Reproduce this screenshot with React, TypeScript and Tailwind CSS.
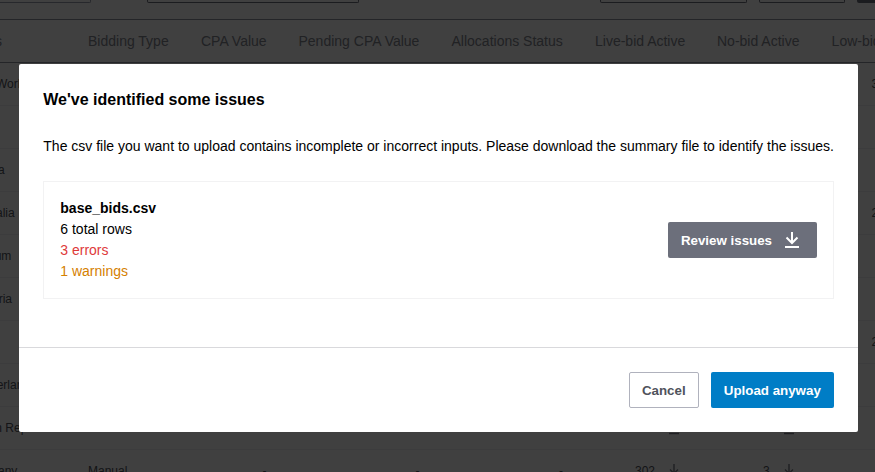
import type { ReactNode } from "react";

type Column = { label: string; width: string };

const columns: Column[] = [
  { label: "Bidding Type", width: "w-[81px]" },
  { label: "CPA Value", width: "w-[65.5px]" },
  { label: "Pending CPA Value", width: "w-[121px]" },
  { label: "Allocations Status", width: "w-[111.5px]" },
  { label: "Live-bid Active", width: "w-[90px]" },
  { label: "No-bid Active", width: "w-[82.6px]" },
  { label: "Low-bid Active", width: "w-[92px]" },
];

type Row = { name: string; type?: string; live?: string; no?: string; low?: string };

const rows: Row[] = [
  { name: "Rest World", low: "374" },
  { name: "" },
  { name: "Russia" },
  { name: "Australia", low: "238" },
  { name: "Belgium" },
  { name: "Bulgaria" },
  { name: "", low: "215" },
  { name: "Switzerland" },
  { name: "Czech Republic" },
  { name: "Germany", type: "Manual", live: "302", no: "3" },
];

function Arrow() {
  return (
    <svg className="h-3.5 w-2.5 shrink-0 text-[#7b7e88]" viewBox="0 0 10 14" fill="none" stroke="currentColor" strokeWidth="1.4">
      <path d="M5 0v9M1 5.5l4 4 4-4M0 12.5h10" />
    </svg>
  );
}

function Value({ width, children }: { width: string; children?: ReactNode }) {
  return <div className={`${width} shrink-0 text-right`}>{children}</div>;
}

function Metric({ width, children }: { width: string; children?: ReactNode }) {
  return (
    <div className={`${width} flex shrink-0 items-center justify-end gap-3.5 pr-1.5`}>
      <span>{children}</span>
      <Arrow />
    </div>
  );
}

function Page() {
  return (
    <div className="h-full w-full overflow-hidden bg-white">
      <div className="flex h-[3px]">
        <div className="w-[91px] shrink-0 rounded-br-xs border-r border-b border-[#9da1ae]" />
        <div className="ml-14 w-[212px] shrink-0 rounded-b-xs border border-t-0 border-[#6c6f7b]" />
        <div className="ml-[241px] w-[147px] shrink-0 rounded-b-xs border border-t-0 border-[#6c6f7b]" />
        <div className="ml-3 w-[86px] shrink-0 rounded-b-xs border border-t-0 border-[#6c6f7b]" />
        <div className="ml-3 w-10 shrink-0 rounded-bl-xs bg-[#6c6f7b]" />
      </div>
      <div className="mt-4 flex h-11 w-[950px] items-center gap-8 border-y border-[#8f929e] text-sm whitespace-nowrap text-[#83868f]">
        <div className="flex w-14 shrink-0 justify-start">
          <span className="-ml-[58px]">Countries</span>
        </div>
        {columns.map((column) => (
          <div key={column.label} className={`${column.width} shrink-0`}>
            {column.label}
          </div>
        ))}
      </div>
      {rows.map((row, index) => (
        <div key={index} className="flex h-[43px] w-[950px] items-center gap-8 border-b border-[#f0f0f2] text-xs whitespace-nowrap text-[#50535c]">
          <div className="w-14 shrink-0">
            <span className="-ml-8">{row.name}</span>
          </div>
          <div className="w-[81px] shrink-0">{row.type}</div>
          <Value width="w-[65.5px]">-</Value>
          <Value width="w-[121px]">-</Value>
          <Value width="w-[111.5px]">-</Value>
          <Metric width="w-[90px]">{row.live}</Metric>
          <Metric width="w-[82.6px]">{row.no}</Metric>
          <div className="w-[92px] shrink-0 pl-10">{row.low}</div>
        </div>
      ))}
    </div>
  );
}

export default function App() {
  return (
    <div className="relative h-[472px] w-[875px] overflow-hidden font-['Liberation_Sans',Arial,sans-serif]">
      <Page />
      <div className="absolute inset-0 flex items-start bg-black/75 pt-16 pl-[19.3px]">
        <div role="dialog" className="flex h-[368px] w-[839px] shrink-0 flex-col rounded-xs bg-white text-sm text-black">
          <div className="flex-1 px-6 pt-6">
            <h1 className="text-base leading-6 font-bold">We've identified some issues</h1>
            <p className="mt-6 leading-[21px] whitespace-nowrap">
              The csv file you want to upload contains incomplete or incorrect inputs. Please download the summary file to
              identify the issues.
            </p>
            <div className="mt-6 flex h-[118px] items-center justify-between border border-[#f2f2f3] p-4 leading-[21px]">
              <div>
                <div className="font-bold">base_bids.csv</div>
                <div>6 total rows</div>
                <div className="text-[#de3a3a]">3 errors</div>
                <div className="text-[#d58000]">1 warnings</div>
              </div>
              <button className="flex h-9 w-[149px] items-center gap-3 rounded-xs bg-[#6c6f7b] pl-[12.6px] text-[13.333px] font-bold whitespace-nowrap text-white">
                Review issues
                <svg className="h-4 w-4" viewBox="0 0 16 16" fill="none" stroke="currentColor" strokeWidth="2">
                  <path d="M8 0v11M2.5 5.5L8 11l5.5-5.5M1 15h14" />
                </svg>
              </button>
            </div>
          </div>
          <div className="flex h-[85px] items-center justify-end gap-3 border-t border-[#d9d9dc] px-6 text-[13.333px] font-bold whitespace-nowrap">
            <button className="h-9 w-[70px] rounded-xs border border-[#b0b2bd] pt-px pr-px text-[#50535c]">Cancel</button>
            <button className="h-9 w-[123px] rounded-xs bg-[#007dc6] pt-px pr-px text-white">Upload anyway</button>
          </div>
        </div>
      </div>
    </div>
  );
}
